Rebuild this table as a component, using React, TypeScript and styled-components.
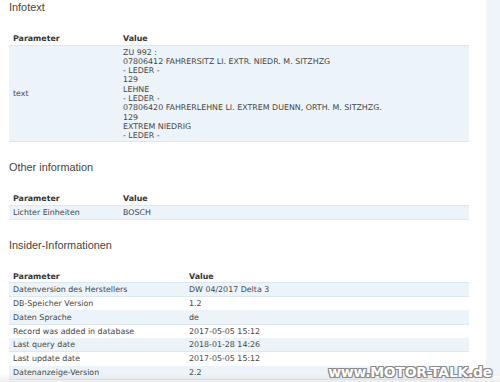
import React from 'react';
import styled, { createGlobalStyle } from 'styled-components';

const GlobalStyle = createGlobalStyle`
    html, body {
        margin: 0;
        padding: 0;
        background: #fff;
    }
`;

type Row = [string, string];

const insider: Row[] = [
    ['Datenversion des Herstellers', 'DW 04/2017 Delta 3'],
    ['DB-Speicher Version', '1.2'],
    ['Daten Sprache', 'de'],
    ['Record was added in database', '2017-05-05 15:12'],
    ['Last query date', '2018-01-28 14:26'],
    ['Last update date', '2017-05-05 15:12'],
    ['Datenanzeige-Version', '2.2'],
];

const infoLines = [
    'ZU 992 :',
    '07806412 FAHRERSITZ LI. EXTR. NIEDR. M. SITZHZG',
    '- LEDER -',
    '129',
    'LEHNE',
    '- LEDER -',
    '07806420 FAHRERLEHNE LI. EXTREM DUENN, ORTH. M. SITZHZG.',
    '129',
    'EXTREM NIEDRIG',
    '- LEDER -',
];

const App = (): React.ReactElement => {
    return (
        <Page>
            <GlobalStyle />
            <Main>
                <Heading $first>Infotext</Heading>
                <Table>
                    <colgroup>
                        <col style={{ width: 110 }} />
                        <col />
                    </colgroup>
                    <thead>
                        <HeadRow>
                            <Th>Parameter</Th>
                            <Th>Value</Th>
                        </HeadRow>
                    </thead>
                    <tbody>
                        <BodyRow $shaded>
                            <Td>text</Td>
                            <MultiCell>
                                {infoLines.map((line, i) => (
                                    <Line key={i}>{line}</Line>
                                ))}
                            </MultiCell>
                        </BodyRow>
                    </tbody>
                </Table>

                <Heading>Other information</Heading>
                <Table>
                    <colgroup>
                        <col style={{ width: 110 }} />
                        <col />
                    </colgroup>
                    <thead>
                        <HeadRow>
                            <Th>Parameter</Th>
                            <Th>Value</Th>
                        </HeadRow>
                    </thead>
                    <tbody>
                        <BodyRow $shaded>
                            <Td>Lichter Einheiten</Td>
                            <Td>BOSCH</Td>
                        </BodyRow>
                    </tbody>
                </Table>

                <Heading>Insider-Informationen</Heading>
                <Table>
                    <colgroup>
                        <col style={{ width: 176 }} />
                        <col />
                    </colgroup>
                    <thead>
                        <HeadRow>
                            <Th>Parameter</Th>
                            <Th>Value</Th>
                        </HeadRow>
                    </thead>
                    <tbody>
                        {insider.map(([param, value], i) => (
                            <BodyRow key={param} $shaded={i % 2 === 0}>
                                <Td>{param}</Td>
                                <Td>{value}</Td>
                            </BodyRow>
                        ))}
                    </tbody>
                </Table>
            </Main>
            <SideStrip />
            <BottomFade />
            <Watermark>www.MOTOR-TALK.de</Watermark>
        </Page>
    );
};

export default App;

const Page = styled.div`
    position: relative;
    display: flex;
    width: 500px;
    height: 382px;
    overflow: hidden;
    background: #fff;
`;

const Main = styled.div`
    width: 460px;
    padding: 0 17px 0 9px;
`;

const SideStrip = styled.div`
    width: 14px;
    height: 376px;
    background: #eef4f8;
`;

const Heading = styled.h2<{ $first?: boolean }>`
    margin: ${(p) => (p.$first ? '0' : '18px')} 0 18px;
    font-family: 'Liberation Sans', Arial, sans-serif;
    font-weight: normal;
    font-size: 10.9px;
    line-height: 14px;
    color: #444;
`;

const Table = styled.table`
    width: 460px;
    border-collapse: collapse;
    table-layout: fixed;
    font-family: 'DejaVu Sans', Verdana, sans-serif;
    font-size: 7.9px;
    color: #444;
`;

const HeadRow = styled.tr`
    height: 13px;
`;

const Th = styled.th`
    padding: 0 4px;
    text-align: left;
    font-weight: bold;
    color: #333;
    vertical-align: middle;
    white-space: nowrap;
`;

const BodyRow = styled.tr<{ $shaded?: boolean }>`
    height: 13.8px;
    background: ${(p) => (p.$shaded ? '#edf4f9' : '#fff')};
    border-top: 1px solid ${(p) => (p.$shaded ? '#dbe8f2' : 'transparent')};
    border-bottom: 1px solid ${(p) => (p.$shaded ? '#dbe8f2' : 'transparent')};
`;

const Td = styled.td`
    padding: 0 4px;
    vertical-align: middle;
    white-space: nowrap;
`;

const MultiCell = styled(Td)`
    padding-top: 2px;
    padding-bottom: 1px;
`;

const Line = styled.div`
    line-height: 9.3px;
`;

const BottomFade = styled.div`
    position: absolute;
    left: 0;
    right: 0;
    bottom: 0;
    height: 8px;
    background: linear-gradient(to bottom, rgba(255, 255, 255, 0), rgba(200, 200, 200, 0.35));
`;

const Watermark = styled.div`
    position: absolute;
    right: 8px;
    bottom: 2px;
    font-family: 'DejaVu Sans', Verdana, sans-serif;
    font-weight: bold;
    font-size: 14px;
    letter-spacing: -0.3px;
    color: #fff;
    text-shadow:
        -1px 0 #8a8a8a,
        1px 0 #8a8a8a,
        0 -1px #8a8a8a,
        0 1px #8a8a8a,
        1px 1px #8a8a8a,
        -1px -1px #8a8a8a,
        1px -1px #8a8a8a,
        -1px 1px #8a8a8a;
`;
